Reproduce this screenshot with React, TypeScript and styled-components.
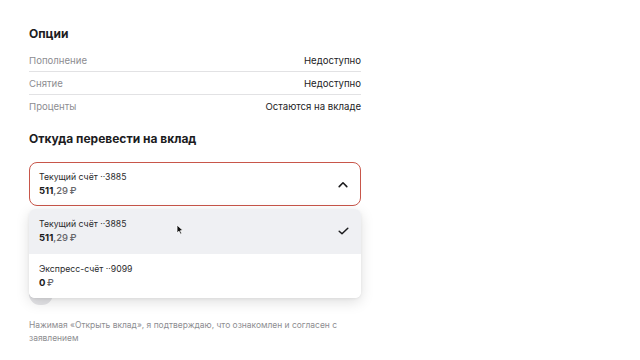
import React, { useState } from 'react'
import styled, { createGlobalStyle, css } from 'styled-components'

const GlobalStyle = createGlobalStyle`
	html, body {
		margin: 0;
		padding: 0;
		background: #ffffff;
	}
	body {
		font-family: Inter, 'Noto Sans', 'Liberation Sans', sans-serif;
		color: #1f1f1f;
		-webkit-font-smoothing: antialiased;
	}
`

const Page = styled.div`
	width: 640px;
	height: 360px;
	overflow: hidden;
	box-sizing: border-box;
	padding: 26px 0 0 29px;
`

const Column = styled.div`
	width: 332px;
`

const Heading = styled.h2<{ $gap: number }>`
	margin: 0 0 ${(p) => p.$gap}px;
	font-size: 12px;
	line-height: 16px;
	font-weight: 700;
	color: #1c1c1e;
`

const OptionList = styled.div`
	margin-bottom: 13px;
`

const OptionRow = styled.div`
	display: flex;
	justify-content: space-between;
	align-items: center;
	height: 23px;
	font-size: 9.6px;
	border-bottom: 1px solid #e2e2e4;
	box-sizing: border-box;

	&:last-child {
		border-bottom: none;
	}
`

const OptionLabel = styled.span`
	color: #8d8d91;
`

const OptionValue = styled.span`
	color: #222224;
`

const SelectWrap = styled.div`
	position: relative;
`

const SelectBox = styled.div`
	display: flex;
	align-items: center;
	justify-content: space-between;
	height: 44px;
	box-sizing: border-box;
	padding: 0 12px 0 9px;
	border: 1.5px solid #c8564a;
	border-radius: 8px;
	background: #fff;
	cursor: pointer;
`

const AccountText = styled.div`
	display: flex;
	flex-direction: column;
`

const AccountName = styled.span`
	font-size: 8.7px;
	line-height: 13px;
	color: #2a2a2c;
`

const Amount = styled.span`
	font-size: 9.5px;
	line-height: 13px;
	color: #66666a;
	font-weight: 500;

	b {
		color: #1a1a1c;
		font-weight: 700;
	}
`

const Menu = styled.div`
	position: absolute;
	top: calc(100% + 3px);
	left: 0;
	right: 0;
	background: #fff;
	border-radius: 6px;
	overflow: hidden;
	box-shadow: 0 4px 14px rgba(0, 0, 0, 0.13), 0 1px 3px rgba(0, 0, 0, 0.06);
	z-index: 2;
`

const MenuItem = styled.div<{ $active?: boolean }>`
	position: relative;
	display: flex;
	align-items: center;
	justify-content: space-between;
	height: 44.5px;
	padding: 0 12px 0 10px;
	background: #fff;
	${(p) =>
		p.$active &&
		css`
			background: #eff0f3;
		`}
`

const BelowRow = styled.div`
	margin-top: 77px;
	height: 22px;
	display: flex;
	align-items: center;
`

const Switch = styled.div`
	width: 24px;
	height: 22px;
	border-radius: 11px;
	background: #e4e4e7;
`

const Note = styled.p`
	margin: 14px 0 0;
	width: 330px;
	font-size: 8.45px;
	line-height: 13px;
	color: #8d8d91;
`

const Cursor = styled.svg`
	position: absolute;
	left: 147px;
	top: 15px;
`

const options = [
	{ label: 'Пополнение', value: 'Недоступно' },
	{ label: 'Снятие', value: 'Недоступно' },
	{ label: 'Проценты', value: 'Остаются на вкладе' },
]

const accounts = [
	{ id: '3885', name: 'Текущий счёт ··3885', whole: '511', fraction: ',29' },
	{ id: '9099', name: 'Экспресс-счёт ··9099', whole: '0', fraction: '' },
]

function Chevron() {
	return (
		<svg width="10" height="7" viewBox="0 0 10 7">
			<path d="M1.2 5.6 L5 1.8 L8.8 5.6" fill="none" stroke="#1c1c1e" strokeWidth="1.6" strokeLinecap="round" strokeLinejoin="round" />
		</svg>
	)
}

function Check() {
	return (
		<svg width="11" height="8" viewBox="0 0 11 8">
			<path d="M1.2 4.2 L4 6.8 L9.8 1.2" fill="none" stroke="#1c1c1e" strokeWidth="1.5" strokeLinecap="round" strokeLinejoin="round" />
		</svg>
	)
}

export default function App() {
	const [selected] = useState('3885')
	const current = accounts.find((a) => a.id === selected)!

	return (
		<>
			<GlobalStyle />
			<Page>
				<Column>
					<Heading $gap={7}>Опции</Heading>
					<OptionList>
						{options.map((o) => (
							<OptionRow key={o.label}>
								<OptionLabel>{o.label}</OptionLabel>
								<OptionValue>{o.value}</OptionValue>
							</OptionRow>
						))}
					</OptionList>
					<Heading $gap={15}>Откуда перевести на вклад</Heading>
					<SelectWrap>
						<SelectBox>
							<AccountText>
								<AccountName>{current.name}</AccountName>
								<Amount>
									<b>{current.whole}</b>
									{current.fraction}{'\u2009'}₽
								</Amount>
							</AccountText>
							<Chevron />
						</SelectBox>
						<Menu>
							{accounts.map((a) => (
								<MenuItem key={a.id} $active={a.id === selected}>
									<AccountText>
										<AccountName>{a.name}</AccountName>
										<Amount>
											<b>{a.whole}</b>
											{a.fraction}{'\u2009'}₽
										</Amount>
									</AccountText>
									{a.id === selected && <Check />}
									{a.id === selected && (
										<Cursor width="8" height="11" viewBox="0 0 8 11">
											<path d="M1 1 L1 9 L3 7.2 L4.5 10.2 L5.8 9.6 L4.4 6.7 L7 6.5 Z" fill="#111" stroke="#fff" strokeWidth="0.8" />
										</Cursor>
									)}
								</MenuItem>
							))}
						</Menu>
					</SelectWrap>
					<BelowRow>
						<Switch />
					</BelowRow>
					<Note>Нажимая «Открыть вклад», я подтверждаю, что ознакомлен и согласен с заявлением</Note>
				</Column>
			</Page>
		</>
	)
}
